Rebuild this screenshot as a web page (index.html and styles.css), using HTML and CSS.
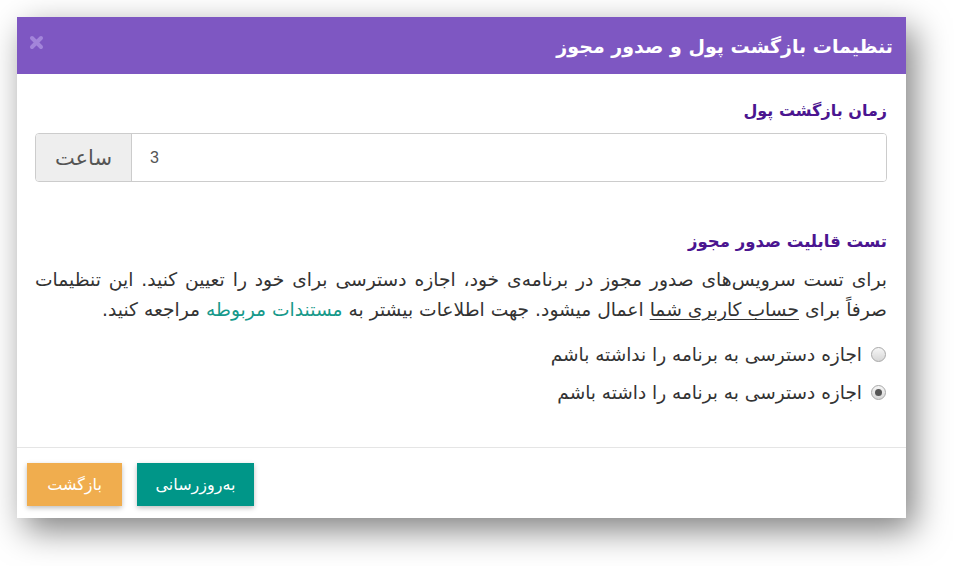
FILE: index.html
```html
<!DOCTYPE html>
<html lang="fa" dir="rtl">
<head>
<meta charset="utf-8">
<title>تنظیمات بازگشت پول و صدور مجوز</title>
<link rel="stylesheet" href="styles.css">
</head>
<body>
<div class="dialog">
  <div class="dialog-header">
    <h2 class="dialog-title">تنظیمات بازگشت پول و صدور مجوز</h2>
    <button class="close" aria-label="بستن">
      <svg width="15" height="15" viewBox="0 0 15 15"><path d="M3 3 L12 12 M12 3 L3 12" stroke="#a385da" stroke-width="4" stroke-linecap="round"/></svg>
    </button>
  </div>
  <div class="dialog-body">
    <h3 class="section-title">زمان بازگشت پول</h3>
    <div class="input-group">
      <input class="form-control" type="text" value="3">
      <span class="addon">ساعت</span>
    </div>
    <h3 class="section-title second">تست قابلیت صدور مجوز</h3>
    <p class="desc">برای تست سرویس‌های صدور مجوز در برنامه‌ی خود، اجازه دسترسی برای خود را تعیین کنید. این تنظیمات صرفاً برای <a class="account" href="#">حساب کاربری شما</a> اعمال میشود. جهت اطلاعات بیشتر به <a class="docs" href="#">مستندات مربوطه</a> مراجعه کنید.</p>
    <label class="radio-row"><span class="radio"></span><span>اجازه دسترسی به برنامه را نداشته باشم</span></label>
    <label class="radio-row"><span class="radio checked"></span><span>اجازه دسترسی به برنامه را داشته باشم</span></label>
  </div>
  <div class="dialog-footer">
    <button class="btn btn-teal">به‌روزرسانی</button>
    <button class="btn btn-orange">بازگشت</button>
  </div>
</div>
</body>
</html>
```
FILE: styles.css
```css
html, body {
  margin: 0;
  padding: 0;
  background: #ffffff;
}
body {
  font-family: "DejaVu Sans", "Noto Sans", sans-serif;
  color: #333333;
  padding: 17px 48px 48px 17px;
}
.dialog {
  width: 889px;
  background: #ffffff;
  box-shadow: 8px 12px 32px rgba(0, 0, 0, 0.5);
  direction: rtl;
}
.dialog-header {
  height: 57px;
  background: #7e57c2;
  display: flex;
  align-items: center;
  justify-content: space-between;
  padding: 0 13px 0 12px;
}
.dialog-title {
  margin: 0;
  color: #ffffff;
  font-size: 19px;
  font-weight: bold;
  line-height: 26px;
}
.close {
  border: 0;
  background: transparent;
  padding: 0;
  width: 15px;
  height: 15px;
  display: flex;
  margin-top: -6px;
}
.dialog-body {
  padding: 25px 19px 36px 18px;
}
.section-title {
  margin: 0;
  font-size: 16px;
  line-height: 24px;
  font-weight: bold;
  color: #4b1590;
}
.section-title.second {
  margin-top: 48px;
  font-size: 16.5px;
}
.input-group {
  margin-top: 10px;
  display: flex;
  height: 49px;
  border: 1px solid #cccccc;
  border-radius: 4px;
  box-sizing: border-box;
  overflow: hidden;
}
.form-control {
  flex: 1;
  border: 0;
  outline: none;
  direction: ltr;
  text-align: left;
  padding: 0 18px;
  font-family: "Liberation Sans", sans-serif;
  font-size: 16px;
  color: #555555;
  background: #ffffff;
}
.addon {
  width: 95px;
  border-right: 1px solid #cccccc;
  background: #eeeeee;
  display: flex;
  align-items: center;
  justify-content: center;
  font-size: 21px;
  color: #555555;
  order: 2;
}
.desc {
  margin: 11px 0 0;
  font-size: 18.7px;
  line-height: 30px;
  text-align: justify;
}
.account {
  color: #333333;
  text-decoration: underline;
  text-underline-offset: 3px;
}
.docs {
  color: #16998a;
  text-decoration: none;
}
.radio-row {
  display: flex;
  align-items: center;
  height: 38px;
  gap: 9px;
  font-size: 18.5px;
  margin-right: 1px;
}
.desc + .radio-row {
  margin-top: 10px;
}
.radio {
  flex: none;
  width: 15px;
  height: 15px;
  border-radius: 50%;
  border: 1px solid #a8a8a8;
  box-sizing: border-box;
  background: linear-gradient(#f6f6f6, #d6d6d6);
  display: flex;
  align-items: center;
  justify-content: center;
}
.radio.checked::after {
  content: "";
  width: 7px;
  height: 7px;
  border-radius: 50%;
  background: #555555;
}
.dialog-footer {
  border-top: 1px solid #e5e5e5;
  padding: 15px 10px 12px;
  display: flex;
  justify-content: flex-end;
  gap: 15px;
}
.btn {
  height: 43px;
  border: 0;
  color: #ffffff;
  font-family: "DejaVu Sans", sans-serif;
  font-size: 16px;
  padding: 0 10px;
  box-shadow: 0 2px 5px rgba(0, 0, 0, 0.26);
}
.btn-teal {
  background: #009688;
  width: 117px;
}
.btn-orange {
  background: #f0ad4e;
  width: 95px;
}
```
